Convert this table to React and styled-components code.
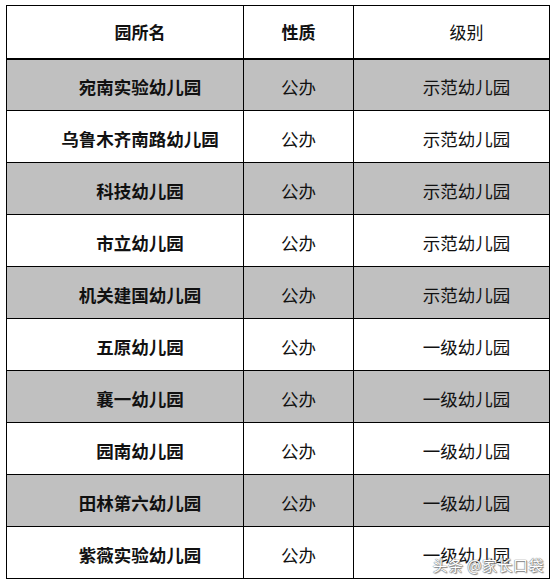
import React from 'react';
import styled, { createGlobalStyle } from 'styled-components';

const GlobalStyle = createGlobalStyle`
    html, body {
        margin: 0;
        padding: 0;
        background: #fff;
    }
    body {
        font-family: "Noto Sans CJK SC", "Liberation Sans", sans-serif;
    }
`

const Page = styled.div`
    position: relative;
    width: 554px;
    height: 586px;
    padding: 5px 0 0 6px;
    box-sizing: border-box;
`

const Table = styled.table`
    border-collapse: collapse;
    width: 543px;
    table-layout: fixed;
`

const HeadCell = styled.th`
    height: 53px;
    padding: 0 0 0 ${p => p.$offset || 0}px;
    border: 1px solid #000;
    border-bottom: 2px solid #000;
    font-size: 17px;
    font-weight: ${p => (p.$bold ? 700 : 400)};
    color: #111;
    text-align: center;
    box-sizing: border-box;
`

const Row = styled.tr`
    background: ${p => (p.$shaded ? '#c0c0c0' : '#fff')};
`

const Cell = styled.td`
    height: 52px;
    padding: 3px 0 0 ${p => p.$offset || 0}px;
    border: 1px solid #000;
    font-size: 17.5px;
    font-weight: ${p => (p.$bold ? 700 : 400)};
    color: #111;
    text-align: center;
    box-sizing: border-box;
`

const Watermark = styled.div`
    position: absolute;
    right: 10px;
    bottom: 11px;
    font-size: 15px;
    color: #fff;
    letter-spacing: 0.5px;
    text-shadow: 0 0 1px #666, 0 0 1px #666, 1px 1px 1px #888;
`

const rows = [
    ['宛南实验幼儿园', '公办', '示范幼儿园'],
    ['乌鲁木齐南路幼儿园', '公办', '示范幼儿园'],
    ['科技幼儿园', '公办', '示范幼儿园'],
    ['市立幼儿园', '公办', '示范幼儿园'],
    ['机关建国幼儿园', '公办', '示范幼儿园'],
    ['五原幼儿园', '公办', '一级幼儿园'],
    ['襄一幼儿园', '公办', '一级幼儿园'],
    ['园南幼儿园', '公办', '一级幼儿园'],
    ['田林第六幼儿园', '公办', '一级幼儿园'],
    ['紫薇实验幼儿园', '公办', '一级幼儿园'],
];

const App = () => {
    return (
        <>
        <GlobalStyle/>
        <Page>
            <Table>
                <colgroup>
                    <col style={{ width: '237px' }}/>
                    <col style={{ width: '110px' }}/>
                    <col style={{ width: '196px' }}/>
                </colgroup>
                <thead>
                    <tr>
                        <HeadCell $bold $offset={30}>园所名</HeadCell>
                        <HeadCell $bold>性质</HeadCell>
                        <HeadCell $offset={30}>级别</HeadCell>
                    </tr>
                </thead>
                <tbody>
                    {rows.map((r, i) => (
                        <Row key={r[0]} $shaded={i % 2 === 0}>
                            <Cell $bold $offset={30}>{r[0]}</Cell>
                            <Cell>{r[1]}</Cell>
                            <Cell $offset={30}>{r[2]}</Cell>
                        </Row>
                    ))}
                </tbody>
            </Table>
            <Watermark>头条 @家长口袋</Watermark>
        </Page>
        </>
    );
}

export default App;
